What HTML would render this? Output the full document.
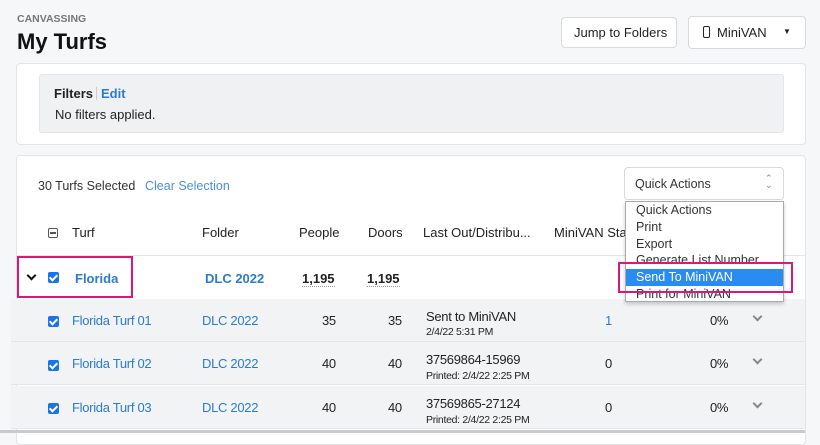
<!DOCTYPE html>
<html><head><style>
*{box-sizing:border-box;margin:0;padding:0}
body{width:820px;height:433px;background:#f6f7f9;font-family:"Liberation Sans",sans-serif;color:#222;position:relative;overflow:hidden;font-size:13px}
.a{position:absolute;white-space:nowrap}
.btn{position:absolute;background:#fff;border:1px solid #d6d9dd;border-radius:4px}
.blue{color:#2b7bd0}
.cb{position:absolute;width:11px;height:11px;background:#1a73e8;border-radius:2px}
.cb:after{content:"";position:absolute;left:3px;top:1px;width:3px;height:6px;border:solid #fff;border-width:0 2px 2px 0;transform:rotate(45deg)}
.row{position:absolute;left:11px;width:794px;height:43px;background:#f2f3f5;border-bottom:1px solid #e4e6e9}
.n{letter-spacing:-0.3px}
.chev{position:absolute;width:7px;height:7px;border:solid #888;border-width:0 2px 2px 0;transform:rotate(45deg)}
</style></head><body>
<div class="a" style="left:17px;top:13px;font-size:10.5px;font-weight:bold;color:#777">CANVASSING</div>
<div class="a" style="left:17px;top:29px;font-size:22px;font-weight:bold;color:#111">My Turfs</div>
<div class="btn" style="left:561px;top:17px;width:116px;height:31px"></div>
<div class="a" style="left:574px;top:25px;font-size:13px">Jump to Folders</div>
<div class="btn" style="left:688px;top:16px;width:118px;height:33px"></div>
<div class="a" style="left:703px;top:26px;width:7px;height:12px;border:1.5px solid #222;border-radius:2px"></div>
<div class="a" style="left:717px;top:25px;font-size:13px">MiniVAN</div>
<div class="a" style="left:783px;top:27px;font-size:8px">▼</div>

<div class="btn" style="left:16px;top:63px;width:790px;height:82px;border-color:#e2e4e7"></div>
<div class="a" style="left:39px;top:74px;width:745px;height:59px;background:#f0f1f2;border:1px solid #e3e5e8;border-radius:3px"></div>
<div class="a" style="left:54px;top:86px;font-weight:bold">Filters</div>
<div class="a" style="left:96px;top:87px;width:1px;height:13px;background:#ccc"></div>
<div class="a blue" style="left:101px;top:86px;font-weight:bold">Edit</div>
<div class="a" style="left:55px;top:107px">No filters applied.</div>

<div class="btn" style="left:16px;top:155px;width:790px;height:290px;border-color:#e2e4e7"></div>
<div class="a" style="left:38px;top:179px;font-size:12.5px;color:#333">30 Turfs Selected</div>
<div class="a" style="left:145px;top:179px;font-size:12.5px;color:#4a90d9">Clear Selection</div>
<div class="btn" style="left:624px;top:167px;width:160px;height:33px"></div>
<div class="a" style="left:635px;top:177px;font-size:12.5px;color:#333">Quick Actions</div>
<div class="a" style="left:765px;top:175px;font-size:9px;color:#888;line-height:7px">⌃<br>⌄</div>

<div class="a" style="left:48px;top:228px;width:10px;height:10px;border:1px solid #555;border-radius:2px"></div>
<div class="a" style="left:50px;top:232px;width:6px;height:1.5px;background:#555"></div>
<div class="a" style="left:72px;top:225px">Turf</div>
<div class="a" style="left:202px;top:225px">Folder</div>
<div class="a" style="left:299px;top:225px">People</div>
<div class="a" style="left:368px;top:225px">Doors</div>
<div class="a" style="left:423px;top:225px">Last Out/Distribu...</div>
<div class="a" style="left:554px;top:225px">MiniVAN Sta</div>
<div class="a" style="left:17px;top:255px;width:788px;height:1px;background:#e4e6e9"></div>

<div class="a" style="left:28px;top:272px;width:7px;height:7px;border:solid #111;border-width:0 2.5px 2.5px 0;transform:rotate(45deg)"></div>
<div class="cb" style="left:48px;top:272px"></div>
<div class="a blue" style="left:75px;top:271px;font-weight:bold">Florida</div>
<div class="a blue" style="left:205px;top:271px;font-weight:bold">DLC 2022</div>
<div class="a" style="left:302px;top:271px;font-weight:bold;border-bottom:1px dotted #999">1,195</div>
<div class="a" style="left:367px;top:271px;font-weight:bold;border-bottom:1px dotted #999">1,195</div>
<div class="a" style="left:17px;top:256px;width:116px;height:42px;border:2px solid #e0157a"></div>

<div class="row" style="top:299px"></div>
<div class="row" style="top:342px"></div>
<div class="row" style="top:386px"></div>

<div class="cb" style="left:48px;top:316px"></div>
<div class="a blue n" style="left:72px;top:313px">Florida Turf 01</div>
<div class="a blue n" style="left:202px;top:313px">DLC 2022</div>
<div class="a n" style="left:322px;top:313px">35</div>
<div class="a n" style="left:388px;top:313px">35</div>
<div class="a n" style="left:426px;top:309px">Sent to MiniVAN</div>
<div class="a n" style="left:426px;top:326px;font-size:10.5px">2/4/22 5:31 PM</div>
<div class="a blue" style="left:605px;top:313px">1</div>
<div class="a n" style="left:710px;top:313px">0%</div>
<div class="chev" style="left:754px;top:313px"></div>

<div class="cb" style="left:48px;top:360px"></div>
<div class="a blue n" style="left:72px;top:356px">Florida Turf 02</div>
<div class="a blue n" style="left:202px;top:356px">DLC 2022</div>
<div class="a n" style="left:322px;top:356px">40</div>
<div class="a n" style="left:388px;top:356px">40</div>
<div class="a n" style="left:426px;top:352px">37569864-15969</div>
<div class="a n" style="left:426px;top:370px;font-size:10.5px">Printed: 2/4/22 2:25 PM</div>
<div class="a" style="left:605px;top:356px">0</div>
<div class="a n" style="left:710px;top:356px">0%</div>
<div class="chev" style="left:754px;top:356px"></div>

<div class="cb" style="left:48px;top:403px"></div>
<div class="a blue n" style="left:72px;top:400px">Florida Turf 03</div>
<div class="a blue n" style="left:202px;top:400px">DLC 2022</div>
<div class="a n" style="left:322px;top:400px">40</div>
<div class="a n" style="left:388px;top:400px">40</div>
<div class="a n" style="left:426px;top:396px">37569865-27124</div>
<div class="a n" style="left:426px;top:414px;font-size:10.5px">Printed: 2/4/22 2:25 PM</div>
<div class="a" style="left:605px;top:400px">0</div>
<div class="a n" style="left:710px;top:400px">0%</div>
<div class="chev" style="left:754px;top:400px"></div>
<div class="a" style="left:0;top:430px;width:805px;height:3px;background:#c8cacd"></div>

<div class="a" style="left:625px;top:201px;width:159px;height:101px;background:#fff;border:1px solid #aaa;box-shadow:0 2px 4px rgba(0,0,0,.2)"></div>
<div class="a" style="left:636px;top:203px;font-size:12.5px;color:#333">Quick Actions</div>
<div class="a" style="left:636px;top:220px;font-size:12.5px;color:#333">Print</div>
<div class="a" style="left:636px;top:237px;font-size:12.5px;color:#333">Export</div>
<div class="a" style="left:636px;top:253px;font-size:12.5px;color:#333">Generate List Number</div>
<div class="a" style="left:626px;top:269px;width:157px;height:17px;background:#2a8cf0"></div>
<div class="a" style="left:636px;top:270px;font-size:12.5px;color:#fff">Send To MiniVAN</div>
<div class="a" style="left:636px;top:287px;font-size:12.5px;color:#333;height:13px;overflow:hidden">Print for MiniVAN</div>
<div class="a" style="left:618px;top:262px;width:175px;height:31px;border:2px solid #e0157a"></div>
</body></html>
